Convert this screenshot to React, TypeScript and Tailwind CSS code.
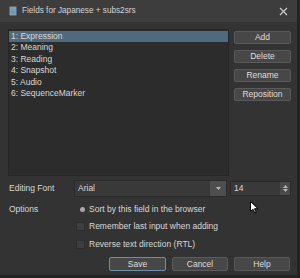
export default function App() {
  const fields = ['1: Expression', '2: Meaning', '3: Reading', '4: Snapshot', '5: Audio', '6: SequenceMarker']
  const btn =
    'h-[13px] flex items-center justify-center rounded-[2px] border border-[#5a5a5a] bg-[#474747] text-[8.5px] text-[#dedede]'

  return (
    <div className="w-[300px] h-[278px] bg-[#232323] relative" style={{ fontFamily: '"Liberation Sans", Arial, sans-serif' }}>
      <div className="w-[297px] h-[275px] flex flex-col bg-[#333333]">
        {/* Title bar */}
        <div className="h-[22px] flex items-center bg-[#3d3d3d] pl-[9px] pr-[9px]">
          <svg width="8" height="10" viewBox="0 0 8 10" className="mr-[5px]">
            <rect x="0.5" y="0.5" width="7" height="9" rx="1" fill="#8a9aa8" stroke="#5c6a76" />
            <path d="M4 3 L4.8 4.8 L6.6 5 L5.2 6.2 L5.6 8 L4 7 L2.4 8 L2.8 6.2 L1.4 5 L3.2 4.8 Z" fill="#3aa0e8" />
          </svg>
          <span className="text-[8.2px] text-[#d4d4d4] flex-1">Fields for Japanese + subs2srs</span>
          <svg width="9" height="9" viewBox="0 0 9 9">
            <path d="M1 1 L8 8 M8 1 L1 8" stroke="#d0d0d0" strokeWidth="1.1" />
          </svg>
        </div>

        {/* Body */}
        <div className="flex-1 flex flex-col pl-[8px] pr-[6px] pt-[7px]">
          <div className="flex gap-[5px]">
            <div className="w-[221px] h-[147px] bg-[#2c2c2c] border border-[#262626] py-[1px] text-[8.5px] text-[#d8d8d8]">
              {fields.map((f, i) => (
                <div
                  key={f}
                  className={`h-[11.4px] leading-[11.4px] pl-[2px] ${i === 0 ? 'bg-[#4f6b7b]' : ''}`}
                >
                  {f}
                </div>
              ))}
            </div>
            <div className="w-[57px] flex flex-col gap-[6px] pt-[2px]">
              <div className={btn}>Add</div>
              <div className={btn}>Delete</div>
              <div className={btn}>Rename</div>
              <div className={btn}>Reposition</div>
            </div>
          </div>

          {/* Editing font */}
          <div className="flex items-center mt-[4px] h-[17px]">
            <span className="w-[66px] pl-[1px] text-[8.5px] text-[#d8d8d8]">Editing Font</span>
            <div className="w-[153px] h-[17px] flex border border-[#2a2a2a] bg-[#393939]">
              <span className="flex-1 pl-[3px] text-[8.5px] text-[#d8d8d8] leading-[15px]">Arial</span>
              <div className="w-[16px] bg-[#4e4e4e] flex items-center justify-center">
                <svg width="5" height="3" viewBox="0 0 5 3">
                  <path d="M0 0 L5 0 L2.5 3 Z" fill="#b8b8b8" />
                </svg>
              </div>
            </div>
            <div className="ml-[3px] w-[61px] h-[15px] flex border border-[#2a2a2a] bg-[#393939]">
              <span className="flex-1 pl-[3px] text-[8.5px] text-[#d8d8d8] leading-[13px]">14</span>
              <div className="w-[10px] bg-[#4a4a4a] flex flex-col items-center justify-center gap-[1px]">
                <svg width="5" height="3" viewBox="0 0 5 3">
                  <path d="M0 3 L5 3 L2.5 0 Z" fill="#b8b8b8" />
                </svg>
                <svg width="5" height="3" viewBox="0 0 5 3">
                  <path d="M0 0 L5 0 L2.5 3 Z" fill="#b8b8b8" />
                </svg>
              </div>
            </div>
          </div>

          {/* Options */}
          <div className="flex mt-[5px] text-[8.5px] text-[#d8d8d8]">
            <span className="w-[68px] pl-[1px] leading-[14px]">Options</span>
            <div className="flex flex-col">
              <div className="h-[14px] flex items-center">
                <span className="w-[13px] flex justify-center">
                  <span className="w-[5px] h-[5px] rounded-full bg-[#a8a8a8]" />
                </span>
                <span className="ml-[0px]">Sort by this field in the browser</span>
              </div>
              <div className="h-[18px] flex items-center mt-[1px]">
                <span className="w-[9px] h-[9px] bg-[#3e3e3e] border border-[#2e2e2e]" />
                <span className="ml-[4px]">Remember last input when adding</span>
              </div>
              <div className="h-[18px] flex items-center">
                <span className="w-[9px] h-[9px] bg-[#3e3e3e] border border-[#2e2e2e]" />
                <span className="ml-[4px]">Reverse text direction (RTL)</span>
              </div>
            </div>
          </div>

          {/* Dialog buttons */}
          <div className="flex justify-end gap-[6px] mt-[4px] pr-[1px]">
            <div className="w-[57px] h-[14px] flex items-center justify-center rounded-[2px] border border-[#6a8fa6] bg-[#474747] text-[8.5px] text-[#dedede]">
              Save
            </div>
            <div className="w-[56px] h-[14px] flex items-center justify-center rounded-[2px] border border-[#5a5a5a] bg-[#474747] text-[8.5px] text-[#dedede]">
              Cancel
            </div>
            <div className="w-[56px] h-[14px] flex items-center justify-center rounded-[2px] border border-[#5a5a5a] bg-[#474747] text-[8.5px] text-[#dedede]">
              Help
            </div>
          </div>
        </div>
      </div>

      {/* mouse cursor */}
      <svg className="absolute left-[250px] top-[201px]" width="9" height="13" viewBox="0 0 9 13">
        <path d="M0.5 0.5 L0.5 10.5 L3 8.2 L4.8 12 L6.2 11.3 L4.5 7.7 L8 7.7 Z" fill="#ffffff" stroke="#000000" strokeWidth="1" />
      </svg>
    </div>
  )
}
